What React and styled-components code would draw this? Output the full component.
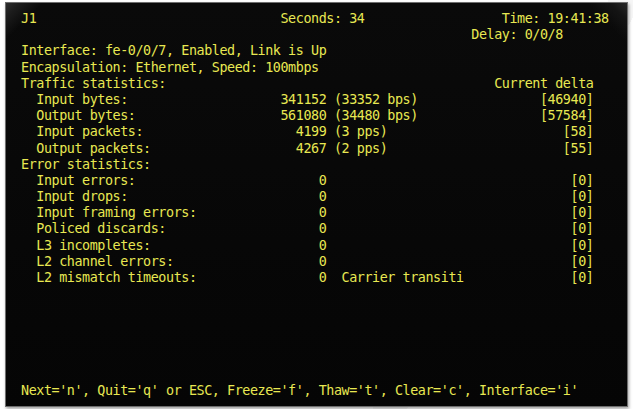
import React from "react";
import styled, { createGlobalStyle } from "styled-components";

const COLS = 80;
const LINE_H = 16.2;

const Global = createGlobalStyle`
  html, body {
    margin: 0;
    padding: 0;
    background: #ffffff;
  }
  body {
    width: 633px;
    height: 409px;
    overflow: hidden;
    background:
      linear-gradient(120deg, transparent 0 70%, rgba(0,0,0,0.035) 70% 74%, transparent 74% 100%),
      #ffffff;
  }
`;

const Page = styled.div`
  padding: 2px 0 0 5px;
`;

const Terminal = styled.div`
  box-sizing: border-box;
  width: 623px;
  height: 405px;
  border: 1px solid #6e6e6e;
  box-shadow: 1px 2px 3px rgba(0, 0, 0, 0.35);
  background:
    linear-gradient(135deg, #2c2c2c 0, #1c1c1c 10px, rgba(8, 8, 8, 0) 26px),
    linear-gradient(225deg, #262626 0, #141414 12px, rgba(8, 8, 8, 0) 28px),
    linear-gradient(180deg, #0a0a0a 0%, #050505 100%);
  padding: 8px 0 0 15px;
  overflow: hidden;
`;

const Screen = styled.div`
  display: flex;
  flex-direction: column;
  font-family: "DejaVu Sans Mono", "Liberation Mono", monospace;
  font-size: 13.4px;
  letter-spacing: -0.43px;
  color: #e8e852;
`;

const Line = styled.div`
  height: ${LINE_H}px;
  line-height: ${LINE_H}px;
  white-space: pre;
`;

// Build a terminal line from [column, text] cells
function compose(cells) {
  let s = "";
  for (const [col, text] of cells) {
    if (s.length < col) s += " ".repeat(col - s.length);
    s = s.slice(0, col) + text;
  }
  return s;
}

const rightAt = (end, text) => [end - text.length, text];

const traffic = [
  ["Input bytes:", "341152", " (33352 bps)", "[46940]"],
  ["Output bytes:", "561080", " (34480 bps)", "[57584]"],
  ["Input packets:", "4199", " (3 pps)", "[58]"],
  ["Output packets:", "4267", " (2 pps)", "[55]"],
];

const errors = [
  ["Input errors:", "0", "", "[0]"],
  ["Input drops:", "0", "", "[0]"],
  ["Input framing errors:", "0", "", "[0]"],
  ["Policed discards:", "0", "", "[0]"],
  ["L3 incompletes:", "0", "", "[0]"],
  ["L2 channel errors:", "0", "", "[0]"],
  ["L2 mismatch timeouts:", "0", "  Carrier transiti", "[0]"],
];

const statLine = ([label, value, extra, delta]) =>
  compose([
    [2, label],
    rightAt(40, value),
    [40, extra],
    rightAt(75, delta),
  ]);

const lines = [
  compose([[0, "J1"], [34, "Seconds: 34"], [63, "Time: 19:41:38"]]),
  compose([[59, "Delay: 0/0/8"]]),
  "Interface: fe-0/0/7, Enabled, Link is Up",
  "Encapsulation: Ethernet, Speed: 100mbps",
  compose([[0, "Traffic statistics:"], [62, "Current delta"]]),
  ...traffic.map(statLine),
  "Error statistics:",
  ...errors.map(statLine),
];

while (lines.length < 23) lines.push("");
lines.push(
  "Next='n', Quit='q' or ESC, Freeze='f', Thaw='t', Clear='c', Interface='i'"
);

export default function App() {
  return (
    <>
      <Global />
      <Page>
        <Terminal>
          <Screen>
            {lines.map((l, i) => (
              <Line key={i}>{l.slice(0, COLS)}</Line>
            ))}
          </Screen>
        </Terminal>
      </Page>
    </>
  );
}
